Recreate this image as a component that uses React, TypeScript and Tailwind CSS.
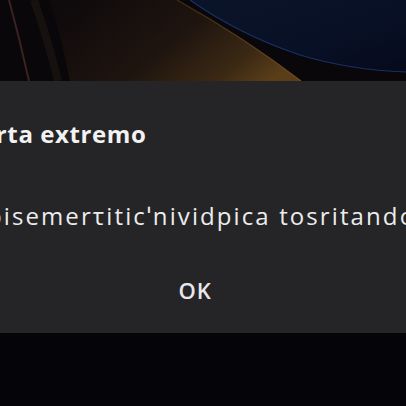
import React from "react";

export default function App() {
  return (
    <div className="relative w-[406px] h-[406px] overflow-hidden bg-[#050409]" style={{ fontFamily: "'Open Sans', 'Noto Sans', sans-serif" }}>
      <div className="h-[81px] w-full">
        <svg width="406" height="81" viewBox="0 0 406 81" className="block">
          <defs>
            <linearGradient id="gold" x1="0" y1="0.3" x2="1" y2="0.7">
              <stop offset="0" stopColor="#0f0a0c" />
              <stop offset="0.5" stopColor="#1f150f" />
              <stop offset="0.8" stopColor="#3a2814" />
              <stop offset="1" stopColor="#5a3e18" />
            </linearGradient>
            <linearGradient id="blue" x1="0" y1="0" x2="1" y2="1">
              <stop offset="0" stopColor="#0a1428" />
              <stop offset="0.6" stopColor="#081026" />
              <stop offset="1" stopColor="#060a1a" />
            </linearGradient>
            <linearGradient id="edge" x1="0" y1="0" x2="1" y2="1">
              <stop offset="0" stopColor="#4a3218" />
              <stop offset="1" stopColor="#7a5824" />
            </linearGradient>
          </defs>
          <rect width="406" height="81" fill="#0a070a" />
          <path d="M50 0 L177 0 Q245 38 301 81 L70 81 Q62 40 50 0 Z" fill="url(#gold)" />
          <path d="M177 0 Q245 38 301 81" stroke="url(#edge)" strokeWidth="1.2" fill="none" opacity="0.8" />
          <path d="M190 0 Q240 35 300 55 Q350 70 406 72 L406 0 Z" fill="url(#blue)" />
          <path d="M190 0 Q240 35 300 55 Q350 70 406 72" stroke="#1c3a78" strokeWidth="1.2" fill="none" opacity="0.8" />
          <path d="M9 0 Q20 40 29 81" stroke="#3a2220" strokeWidth="2" fill="none" />
          <path d="M34 0 Q48 40 58 81" stroke="#16100f" strokeWidth="8" fill="none" />
        </svg>
      </div>
      <div className="h-[252px] w-full bg-[#252527] flex flex-col">
        <div className="pt-[38px] -ml-[44px] text-[24px] leading-[30px] font-bold tracking-[0.6px] text-[#f2f2f2] whitespace-nowrap">Alerta extremo</div>
        <div className="mt-[52px] -ml-[13px] text-[24px] leading-[30px] tracking-[2.1px] text-[#ececec] whitespace-nowrap">bisemerτiticˈnividpica tosritando</div>
        <div className="mt-[46px] text-center text-[22px] leading-[26px] font-semibold tracking-[0.8px] text-[#e8e8ec] pr-[16px]">OK</div>
      </div>
    </div>
  );
}
